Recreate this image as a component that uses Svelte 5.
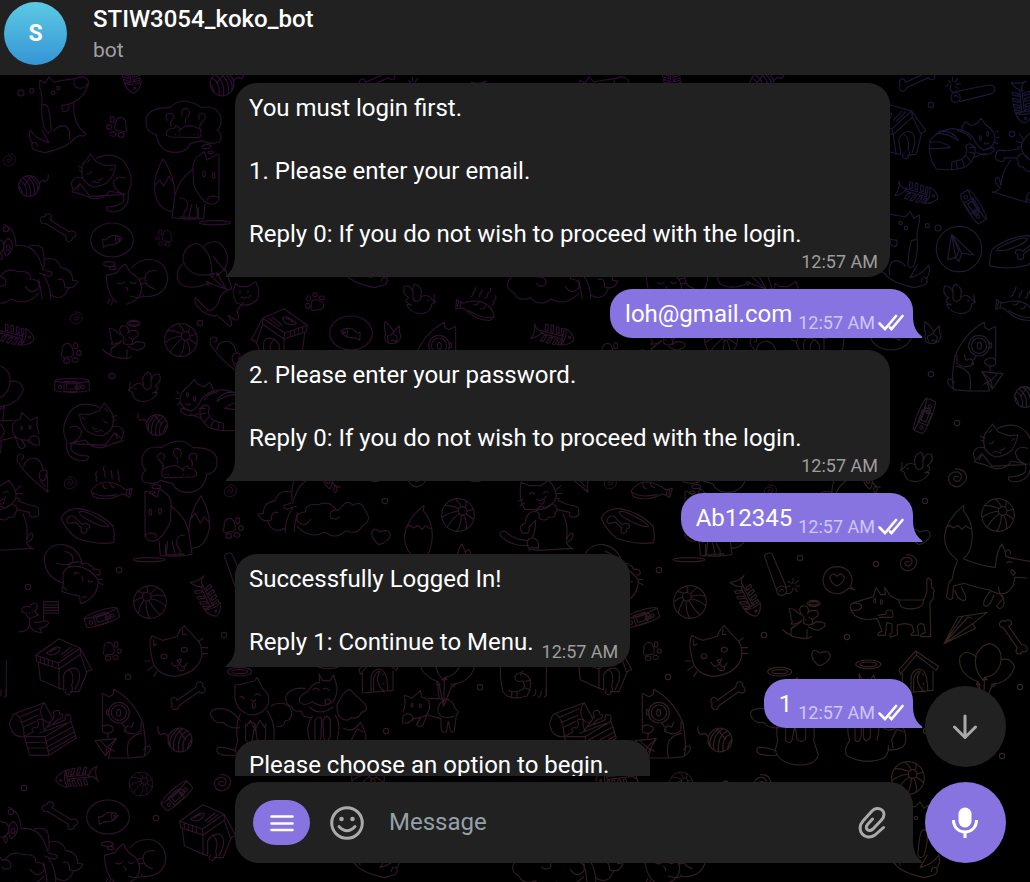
<script>
  const ring = (x, y, r, q = r) => `M${x - r} ${y}a${r} ${q} 0 1 0 ${2 * r} 0a${r} ${q} 0 1 0 ${-2 * r} 0Z`;

  // Doodles: [centre x, centre y, outline]. Drawn at three units per pixel.
  const art = {
    dot: [0, 0, ring(0, 0, 8)],
    ball: [0, 0, ring(0, 0, 49) + ring(14, -12, 13) + 'M10 -25Q4 -38 -8 -48M22 -22Q26 -34 24 -43M27 -12Q38 -14 46 -18M23 -3Q42 8 47 14M17 1Q30 24 24 43M10 1Q10 30 -4 49M4 -4Q-20 14 -32 36M1 -12Q-30 -8 -48 8M3 -19Q-22 -30 -40 -28'],
    paw: [0, 0, 'M-4 -14Q0 -32 16 -28Q30 -20 26 -4Q34 10 22 14Q10 10 0 12Q-12 6 -4 -14Z' + ring(-14, -22, 6, 9) + ring(-24, 0, 7, 7) + ring(-12, 21, 9, 7) + ring(13, 24, 9, 7)],
    bone: [0, 0, 'M-34 -8Q-30 -22 -42 -22Q-54 -20 -52 -8Q-62 -4 -58 8Q-50 18 -38 8L34 8Q38 20 48 18Q58 12 52 2Q62 -6 54 -14Q44 -22 34 -8Z'],
    swirl: [0, 0, 'M4 -3Q-8 -8 -9 2Q-4 14 8 6Q18 -8 4 -16Q-16 -20 -23 -2Q-24 22 0 24Q26 18 26 -6Q20 -26 -4 -25'],
    yarn: [0, 0, ring(0, 0, 31) + 'M-26 -15Q-4 -6 -8 30M-18 -24Q8 -8 4 30M-8 -30Q22 -10 16 26M4 -30Q32 -8 25 16M-30 0Q-22 8 -20 22M-14 -2Q-2 -16 6 -30M30 -8Q40 -22 48 -14Q58 -14 58 -34'],
    collar: [0, 0, 'M-52 -14Q-50 -22 0 -23Q50 -22 52 -14V12Q48 18 0 19Q-48 18 -52 12ZM-52 -14Q0 -4 52 -14M-24 -14H14V17H-24ZM-16 -7H24V9H-16Z' + ring(-36, 3, 5) + ring(14, 3, 5) + ring(32, 3, 5)],
    fishbone: [0, 0, 'M-60 -24Q-52 -2 -34 -7Q-38 12 -64 22Q-52 2 -60 -24ZM-34 -6L30 -2V6L-34 1ZM-28 -28h8l3 18h-8ZM-11 -28h8l3 19h-8ZM6 -26h8l3 18h-8ZM22 -24h7l2 18h-7ZM-26 6h8l-8 18h-8ZM-8 8h8l-8 18h-8ZM10 9h8l-8 18h-8ZM26 10h6l-6 16h-8ZM34 -26Q62 -14 64 4Q52 22 30 25Q44 0 34 -26Z' + ring(50, -2, 3)],
    heart: [0, 0, 'M-4 -12Q-22 -30 -28 -8Q-26 12 -6 26Q22 18 28 -2Q26 -24 -4 -12Z'],
    loveNote: [712, 120, 'M748 144Q728 162 712 161Q672 158 670 120Q674 82 712 80Q752 82 757 120Q756 134 752 140L765 150ZM712 109Q698 94 690 112Q692 128 712 138Q734 128 734 112Q726 94 712 109Z'],
    bird: [435, 320, 'M396 322L386 330L397 336Q398 362 428 364Q462 362 472 336L458 338Q484 326 466 316Q488 302 478 282Q460 276 452 304Q458 284 446 275Q422 286 430 314Q410 302 396 322ZM430 314Q430 326 444 328Q458 320 452 304M390 306V320L386 330M404 324l5 2'],
    fish: [335, 632, 'M272 636Q290 606 325 608Q352 612 374 630Q386 632 396 627L388 655Q378 646 366 644Q320 668 280 652ZM278 640Q300 656 350 646M380 632l-2 14M388 632l-2 14M308 614q-2 12 10 14M330 612q2 12 12 12M290 576q-8 8 0 16q-6 8 0 14M312 560q-6 10 2 18q-4 12 2 16M334 574q-4 8 2 14q-4 6 0 10M354 572q-4 10 2 18q-4 8 2 14'],
    bowl: [265, 738, 'M184 714Q200 684 240 686Q300 696 340 738Q346 760 342 788Q290 796 230 774Q198 748 184 714ZM238 696Q250 688 290 712Q330 734 326 740Q304 742 262 718Q240 706 238 696ZM214 728Q200 734 202 718Q212 702 226 712L248 734Q256 726 268 734Q274 744 262 746Q262 762 250 760Q240 756 246 744L228 726Q224 730 214 728Z'],
    house: [190, 320, 'M108 285L178 235L242 264L176 308ZM108 285L112 304L178 326L242 282V264M176 308L178 326V384L122 358L116 308M242 264L276 328L260 334L242 282M178 384L192 388M212 394L238 394L262 336M192 386V344Q204 320 228 324Q244 330 238 362L226 388M200 388Q190 396 206 404Q224 392 216 376Q226 344 210 330M140 278L168 260L182 262L176 276Q156 290 140 278ZM152 276Q160 264 172 266M184 284L214 260M192 288L224 264M122 290V304M134 295V312M146 299V316M158 302V320'],
    frontHouse: [955, 395, 'M898 388L948 332L1016 378L1010 390L950 344L902 402ZM908 400V458L1000 450V392M950 332V344M934 455V410Q940 386 960 386Q984 390 984 450M942 455V414Q950 390 962 394Q940 420 974 455M968 400l3 4M970 428l3 4'],
    fishThought: [0, 0, ring(0, 0, 64, 51) + 'M-28 -2L-26 22L-10 14Q14 18 30 -4Q18 -18 -4 -12Q-14 -6 -18 0ZM14 -14Q4 -2 16 10' + ring(20, -2, 3)],
    napCat: [410, 840, 'M394 804Q420 772 464 780Q504 796 502 842Q492 892 430 890M430 884Q424 900 390 888M468 812Q434 808 434 838Q438 860 462 866M348 906Q320 884 318 826L350 818Q360 800 376 792Q380 806 394 820Q430 840 422 878Q414 902 380 912M352 848q12 8 20 -2M390 846q10 10 18 0M376 860q8 6 6 12M416 838l16 -4M420 852l14 -2M328 896l-6 14M336 900l-2 14' + ring(327, 792, 17, 7) + ring(337, 804, 10, 5)],
    planeCat: [303, 550, 'M246 524Q242 496 256 484L272 463L288 486Q306 494 320 498L347 496Q344 520 330 540Q314 560 280 562Q248 550 246 524ZM288 476Q340 452 374 488Q408 540 384 578Q392 626 346 636Q316 638 320 622Q356 622 370 606Q376 590 364 580Q344 572 340 548Q352 526 376 536M376 584Q346 578 328 574Q312 602 274 596L244 584L216 576L240 552L270 590ZM246 534Q220 528 214 552L218 568M240 552L232 570M236 500l12 6M238 512l8 4M262 522q10 2 12 -8M294 540q10 4 14 -6M276 548l8 -4q6 8 14 4M262 488l8 -8M330 512l8 -6'],
    fox: [560, 570, 'M578 510Q576 476 600 464L612 454L620 480L638 470Q654 460 656 464V596Q650 614 630 612Q602 606 580 554ZM622 600Q620 588 640 588Q656 590 655 598M578 508Q536 536 524 586L515 652Q540 660 610 656L614 612M588 614L592 650M574 614L566 650M594 622V650M538 594Q566 594 560 626Q546 642 552 650M515 634Q470 630 462 568Q462 520 488 476Q524 530 524 584M464 556L478 540L490 558L506 528L518 546M538 656q6 -12 14 0q8 -10 14 0q8 -10 14 0q8 -10 18 0' + ring(611, 522, 4, 9) + ring(640, 526, 4, 9) + ring(644, 668, 47, 6)],
    idea: [553, 380, 'M470 402Q434 396 440 354Q450 320 510 322Q550 282 606 322Q650 312 664 350Q666 382 652 388Q672 408 660 424Q628 436 608 420L572 430Q560 458 520 456Q476 450 470 402ZM500 404Q500 382 524 384L528 376Q548 384 538 392Q558 370 580 378L602 386Q610 408 596 412L512 410ZM502 360q-10 -24 14 -20q14 10 0 20q-6 8 -2 18M548 348q-8 -22 12 -24q18 10 4 24q-10 8 -6 20M600 356q-10 -14 8 -18q18 10 2 24q-10 8 -10 20' + ring(621, 439, 13, 6) + ring(633, 456, 8, 4) + 'M526 402v2M540 402v2M584 402v2M596 402v2'],
    tabby: [245, 222, 'M244 180Q246 164 256 154L272 168Q284 164 290 160L302 145L316 164Q346 182 344 210Q338 236 310 240Q296 236 280 206Q262 178 216 176Q170 182 150 210Q140 260 168 297Q220 304 256 290Q288 268 284 236Q270 212 256 228Q266 250 244 268L216 276M280 262L314 250M290 248Q320 262 342 242L340 232L320 236M268 232h18M266 246l18 4M258 258l12 14M244 268l8 20M228 274l2 22M214 278v20M176 184Q220 180 234 212Q206 190 168 190M148 216Q190 212 210 232Q190 236 146 236M230 182Q262 188 272 208M346 188l8 -6M348 202h8M344 216l8 6M312 218q6 8 14 0' + ring(300, 204, 3, 7) + ring(322, 192, 3, 7)],
    detective: [370, 495, 'M308 404V506Q304 520 324 520Q344 516 340 502Q320 488 310 500M308 400L328 410L340 404L342 388Q402 420 430 490Q442 550 434 590L390 594H326L334 566M434 588Q460 570 450 558Q436 558 432 570M326 520L324 534M286 542L350 536L318 588ZM318 588L322 562L350 536M322 562L344 574M322 562L304 544M386 594Q380 560 388 542Q404 522 426 520M374 514Q378 490 396 502L402 486M374 514Q402 530 424 512V486M380 512q-8 -8 2 -14M366 488L374 500' + ring(358, 458, 31) + ring(358, 458, 23) + ring(357, 458, 6, 10) + ring(323, 457, 3, 8)],
    chest: [130, 510, 'M30 494Q34 466 48 460L134 428L158 474M30 494Q38 534 72 530L100 516M48 460Q72 480 74 530L90 586L148 586L136 530L74 530M136 530L214 484L230 534L148 586M134 428Q116 450 128 474Q138 490 150 486M60 472L118 446M64 488L114 466M72 502L108 484M82 548L138 546M86 564L142 564M140 544L220 500M144 560L224 516M146 574L226 528M100 516Q92 506 104 502Q116 510 116 488Q108 476 122 478Q134 476 130 490L134 512L164 470Q156 452 170 452Q180 448 180 462Q196 464 184 476Q172 476 160 494L196 480Q194 462 206 464Q218 466 212 486M120 520L200 490M146 500l18 -10'],
    sheep: [100, 870, 'M0 784Q26 786 28 806Q26 830 4 832M26 742Q62 754 64 806Q112 800 134 846L146 878L172 886Q176 894 162 898L134 888M104 808Q124 800 142 812Q150 830 148 870M150 846Q190 838 198 872Q234 876 234 910L250 912Q238 940 210 930Q210 900 190 908M132 908Q140 940 142 966M146 894Q170 930 168 966M-70 900Q-60 870 -34 886Q-20 866 0 890Q10 910 22 892Q40 872 70 884Q108 880 108 906Q140 908 132 934Q110 956 92 928M-70 900Q-96 930 -62 948Q-50 976 -14 962Q16 992 50 966Q92 990 132 950M168 954Q206 976 222 932M12 898Q40 902 32 924Q12 932 6 920M30 830Q20 796 42 784Q60 800 50 820Q40 836 34 836Z' + ring(34, 756, 8) + ring(40, 812, 6, 8) + ring(18, 838, 5, 9)],
    angelRat: [370, 180, 'M360 146Q366 132 382 140Q390 150 384 160M384 160Q390 148 410 152Q420 160 414 168L400 178M360 146Q360 160 372 170L372 190Q388 200 398 190Q402 182 394 174M362 164Q340 142 328 146Q334 160 334 178Q342 184 334 192Q348 194 366 182M398 194Q410 178 436 190Q438 202 424 206Q418 214 402 208L386 200M366 184L336 206Q330 224 338 230L308 208Q330 234 382 236V208M382 236L396 230M334 206L346 196M378 178l2 2M388 172l2 2' + ring(402, 130, 20, 9) + ring(402, 130, 14, 5)],
    mouse: [100, 580, 'M60 554Q48 544 54 528Q64 518 72 528Q72 540 64 538M60 554Q80 588 142 634L144 606Q142 590 142 574Q130 566 120 578Q114 598 130 604Q142 598 138 584M72 562Q76 534 106 536Q126 542 130 568M122 604L136 620' + ring(143, 634, 3)],
    flagRat: [115, 170, 'M92 136Q102 122 112 132Q114 146 104 152M92 140Q74 134 66 146Q64 158 80 158M80 158Q78 172 94 174L116 164L104 152M90 174Q84 200 104 212L126 218L120 204Q140 202 148 186Q138 178 122 186L104 186M88 198Q84 214 60 214M96 152l2 2M88 158l2 2M132 124H176V158H132ZM132 134H176M132 142H176M132 150H176M132 158V180'],
    faceCat: [530, 275, 'M454 288Q444 250 454 226L486 240Q508 236 530 228Q538 206 552 196Q568 214 584 232Q608 250 604 290Q588 342 520 348Q460 342 454 288ZM460 238V256L470 250M548 208L546 222L558 222M594 244l14 -10M604 262h18M604 280h18M434 302h16M442 330l16 -12M460 348l10 -14M512 306Q522 328 538 310Q550 330 560 308M530 300L538 310L544 296ZM532 322Q536 336 552 328V318' + ring(491, 288, 9, 7) + ring(552, 268, 9, 7)],
    curlCat: [215, 60, 'M190 70Q130 50 132 -10Q146 -50 190 -46Q240 -34 246 16M190 70Q180 24 214 20Q262 14 294 60Q294 108 250 128L240 130L238 108Q206 104 184 94ZM194 -26Q222 -20 218 6Q200 20 170 10M190 82l8 8M246 110l12 2M222 44q0 -10 14 -4M264 60q0 10 12 4M244 48q6 8 2 14M204 22Q210 4 226 8Q234 0 246 12Q262 6 268 16Q280 18 278 28Q300 24 300 40Q296 48 290 44M296 58h10M296 68l12 6'],
    standCat: [950, 170, 'M914 148Q894 118 902 66L928 76H960L986 60Q1016 96 1004 120Q984 148 950 148ZM952 144Q962 132 974 144Q992 126 1006 136Q1016 152 1004 158Q1006 174 986 170Q978 182 966 178Q950 176 958 162Q944 152 952 144ZM1012 120Q1050 138 1060 136Q1078 140 1074 152Q1080 168 1062 170Q1042 172 1048 156L1010 148M1028 160Q1046 200 1038 240Q1050 210 1058 222Q1058 240 1040 246M1038 246Q1044 260 1058 266M946 154Q920 150 914 190Q896 194 902 208Q902 220 914 218Q930 222 926 200L946 180Q946 210 936 232Q912 238 926 266L954 270L1058 264M952 270Q962 238 934 232M924 256Q870 258 840 226Q836 212 854 212Q880 240 920 240M926 272q4 -18 14 -8q12 -8 14 6M928 102q6 -12 14 0M970 98q8 -8 14 -2M950 116q10 10 16 0q8 4 10 -8M958 128q8 10 14 -6M1006 90l16 -14M1008 100h18M1006 112l12 4M894 122l14 -4M898 136l14 -8'],
    angelCat: [100, 170, 'M46 74L66 72Q90 64 104 62L112 52Q126 74 128 84Q152 100 146 130Q130 164 94 164Q54 156 46 116ZM62 160Q46 190 54 240Q50 260 46 270Q60 312 120 314Q170 312 176 284L162 240Q170 190 142 150M78 190V240Q92 256 98 236L106 190L112 236Q126 252 138 236V190M106 190Q92 176 78 200L92 180L106 210L120 180L138 204M62 180Q20 130 -22 150Q-34 160 -20 176Q-10 190 12 186Q24 206 60 202M154 136Q200 116 216 152Q218 180 196 182Q194 202 172 198M50 272Q14 258 -6 262Q-14 276 4 282Q30 288 50 284M60 112q8 -8 14 4M106 104q10 -8 16 2M94 118l8 6l6 -6M98 126v16q12 6 8 -14' + ring(60, 34, 36, 13) + ring(60, 34, 24, 6)],
    angelFox: [310, 140, 'M298 40L300 66Q280 66 264 94Q234 106 240 126Q256 140 278 124Q308 142 322 132Q352 126 352 80L342 44L330 62L308 60ZM270 140Q300 170 340 140M256 84Q210 80 198 110Q196 130 216 140Q222 156 246 152Q242 170 276 172M352 134Q380 80 392 88Q410 110 436 130Q448 154 424 156Q420 176 394 172Q384 186 364 174Q350 160 352 134M278 168Q256 200 270 240Q250 270 262 286Q320 316 372 294Q388 280 386 256M346 164Q366 190 352 240M286 180V240Q300 250 304 230L306 180Q304 160 286 180M310 180Q322 156 332 180V230Q322 250 312 234ZM372 204Q400 220 422 186Q442 220 438 240Q436 272 386 268M400 262L396 238L412 206L430 214M280 88q10 -10 18 2M310 86q10 -6 18 4' + ring(324, 124, 8) + ring(326, 12, 38, 13) + ring(326, 12, 25, 7)],
    balloons: [1160, 370, 'M1148 422Q1116 384 1128 344Q1150 306 1176 314Q1210 330 1200 374Q1188 408 1158 412ZM1128 352Q1094 324 1078 354Q1074 404 1132 426M1202 360Q1234 352 1242 384Q1226 430 1174 434M1154 412l-6 8h12ZM1132 426l-4 8l12 2ZM1174 434l6 8l6 -10ZM1152 420L1150 500M1136 434L1150 500M1174 440L1150 500'],
    balloonDog: [620, 130, 'M548 156Q558 134 552 106L574 116L600 92L604 112Q638 118 624 156Q620 176 578 176Q566 194 548 190Q542 168 560 162Q582 164 578 184M626 116L678 118Q700 124 704 146Q720 158 708 166L702 214Q696 222 690 212L684 184L678 216Q666 222 662 206V176Q624 168 620 164L608 196Q594 208 590 190L602 172M600 176L588 196M656 114L652 74M684 118Q654 124 652 152Q660 182 700 170' + ring(575, 137, 3, 5) + ring(600, 138, 3, 5)],
    balloonCat: [690, 60, 'M700 36L706 10L718 20H742L768 5Q784 40 770 60Q746 84 712 70Q700 58 700 36ZM696 26Q660 34 656 66Q640 96 624 90Q606 74 588 54Q574 64 610 96Q640 112 652 106L690 140Q702 130 684 106L706 120Q724 122 710 92L730 68M720 32v8M744 30v8M724 50q8 10 14 0q8 8 14 -4M676 -34L696 26M640 -70L676 -26'],
    cluster: [610, 795, 'M636 822Q572 838 550 782Q548 740 590 730Q638 748 636 822ZM612 738Q630 722 656 726Q692 754 680 796Q670 820 650 824M550 790Q522 818 540 850Q570 872 620 852M630 824l14 -4l-6 12ZM650 818l10 6l-8 4ZM620 844l12 4l-8 8ZM636 830L678 868M656 826L680 868M626 848L680 868'],
    sitDog: [170, 345, 'M118 240L134 250L146 230L160 246Q200 238 226 236Q250 224 262 238Q268 250 258 268Q236 312 184 316L186 326Q184 336 196 334Q208 328 206 312M262 252Q250 268 234 264Q218 260 222 240M118 240V262Q128 290 124 316Q122 350 132 386Q136 398 146 398Q154 394 152 380Q148 330 140 316L128 314M220 308Q218 360 240 386L256 402Q250 412 240 406L224 414L208 430Q178 450 132 458L104 450Q90 442 96 430Q110 422 112 440M96 430Q82 410 90 390Q104 416 146 428L124 390M160 394Q170 376 196 378Q214 392 206 420' + ring(158, 279, 5) + ring(174, 264, 5) + ring(94, 272, 6) + ring(62, 279, 9)],
    bubblePlane: [238, 538, ring(238, 538, 68) + 'M216 494L282 556L246 550L238 576L228 564L204 570ZM216 494L228 564L238 544ZM216 494L246 550'],
    glider: [255, 775, 'M192 822L234 742L322 728L278 762L286 776ZM192 822L248 740M192 822L264 742L276 746M192 822L278 762'],
    stick: [280, 70, 'M226 66L328 46Q346 46 346 62Q342 70 336 72L240 96M214 82Q214 68 230 68Q246 76 240 92Q226 104 216 92ZM222 80q8 -8 12 2M220 68Q206 60 214 46M214 40l-8 -8M220 36l-2 -14M226 38l8 -12M230 44l12 -2M228 50l8 6M206 46l-8 4'],
    rocket: [545, 105, 'M530 154L494 54Q490 42 502 40Q514 36 518 48L558 142' + ring(544, 152, 15, 14) + 'M538 154q4 -10 12 -2M558 160Q576 164 578 144M578 130v-14M584 130l10 -8M586 138l12 0M584 146l6 8M572 130l-8 -6M570 138l-8 2'],
    flame: [515, 190, 'M494 156Q490 176 496 194Q486 214 510 222Q540 222 542 198Q534 184 538 168Q524 178 520 188Q514 170 494 156ZM506 216Q494 196 512 196Q518 186 524 196Q536 200 526 218Q520 206 514 214'],
    terrier: [870, 210, 'M750 200Q752 188 774 184L820 170L828 142L842 164H856L854 142L872 168L896 180H968Q984 170 980 120Q986 108 994 122V142Q1008 148 1000 158Q1004 178 990 186L992 290H962Q960 282 976 278L972 254Q960 246 952 258L956 286H934Q930 282 942 276L936 256Q914 246 892 256V284L872 292Q866 284 876 278V252L860 248L856 286H834Q834 276 846 274L832 236Q760 248 750 200ZM760 190Q788 188 784 204Q774 214 756 210M896 178Q896 204 920 206Q974 210 970 178M834 226L858 222Q856 210 868 210Q880 210 878 220Q884 234 868 232L838 232' + ring(824, 182, 3, 7) + ring(844, 186, 3, 7)],
    runFox: [330, 600, 'M232 570Q190 540 194 496Q200 446 252 406L250 422Q282 460 276 510Q272 550 250 566Q300 588 346 592Q350 540 366 522Q378 548 378 560Q410 568 450 574M378 544Q388 532 392 552M232 574Q222 596 216 630Q206 624 200 680Q208 694 218 684L220 648L252 640Q300 656 330 660Q362 680 384 666L400 646L404 622L440 624M224 660Q232 690 252 692Q264 686 252 668L244 650M332 662Q306 694 312 706Q324 720 342 676M356 652Q356 672 370 684L350 708Q358 724 370 708Q376 690 366 676M198 472L210 466L220 474L234 466L246 478L256 468L272 476M380 578q8 -6 16 0M396 598q-8 12 4 18l6 -8Z'],
    striped: [910, 60, 'M846 0Q836 40 850 96Q870 124 922 108Q942 72 926 50Q904 30 886 46Q884 70 908 62Q920 76 910 88Q890 100 868 92M892 94v18M876 96v16M918 84l14 6M916 64l18 -4M902 46l8 -14M940 108q10 -4 8 -20M956 112q10 -4 8 -20M974 112q8 -4 4 -20M980 0V108'],
  };

  const crowd = [
    ['sitDog', 57, 115], ['sitDog', 362, 250, 0, -1], ['sitDog', 372, 840, 0, -1], ['idea', 184, 127], ['fox', 187, 190], ['planeCat', 101, 183],
    ['napCat', 137, 280], ['napCat', 135, 860], ['cluster', 203, 265], ['balloonCat', 230, 300], ['sheep', 28, 267], ['sheep', 33, 850], ['sheep', 308, 500, 0, -1],
    ['idea', 179, 467, 0, -1], ['fox', 177, 527, 0, -1], ['planeCat', 94, 432, 0, -1], ['planeCat', 463, 453], ['tabby', 422, 144], ['tabby', 213, 405, 0, -1],
    ['detective', 123, 725], ['detective', 435, 358, 0, -1], ['chest', 43, 730], ['angelRat', 123, 340], ['angelRat', 263, 620], ['mouse', 33, 473], ['mouse', 226, 356], ['flagRat', 38, 617],
    ['faceCat', 177, 652], ['curlCat', 72, 580], ['standCat', 537, 517], ['standCat', 495, 170, 14, -1], ['angelCat', 253, 717], ['angelFox', 323, 707],
    ['balloons', 447, 663], ['balloonDog', 427, 703], ['balloons', -4, 385], ['balloonDog', 15, 425, 0, -1], ['bubblePlane', 419, 249], ['glider', 425, 628],
    ['stick', 433, 93], ['rocket', 242, 575], ['flame', 392, 333], ['terrier', 350, 610], ['runFox', 450, 570], ['striped', 523, 680],
    ['fishThought', 112, 240], ['fishThought', 108, 817], ['fishThought', 351, 333, 0, -1], ['frontHouse', 378, 672], ['house', 63, 667], ['house', 207, 833], ['house', 357, 132, -8], ['house', 280, 337, 0, -1],
    ['bowl', 88, 526], ['bowl', 477, 252, 6, -1], ['fish', 112, 490], ['fish', 475, 308, 20, -1], ['bird', 145, 387], ['bird', 377, 467], ['bird', 419, 299, 0, -1],
    ['heart', 381, 536], ['heart', 281, 657], ['loveNote', 297, 580],
    ['fishbone', 377, 193, 12], ['fishbone', 13, 335, 10], ['fishbone', 207, 597, 60], ['fishbone', 77, 777, 170], ['fishbone', 482, 102, 80], ['fishbone', 131, 72, 80],
    ['collar', 72, 386], ['collar', 102, 618, -18], ['collar', 177, 796, -42], ['collar', 433, 207, 58], ['collar', 385, 416, -68],
    ['ball', 181, 340], ['ball', 150, 602, 280], ['ball', 141, 784, 0, 0.73], ['ball', 458, 515], ['ball', 368, 778],
    ['yarn', 29, 186], ['yarn', 222, 84, 0, 1.15], ['yarn', 157, 425, 0, -1], ['yarn', 180, 740, 0, -1.15], ['yarn', 485, 397],
    ['paw', 117, 127], ['paw', 164, 238, 0, 0.8], ['paw', 71, 353, 0, -1], ['paw', 112, 651, 0, -0.9], ['paw', 233, 528, 0, -1], ['paw', 315, 302, 90, 0.9],
    ['swirl', 9, 160, 0, 0.75], ['swirl', 76, 318, 0, 0.75], ['swirl', 70, 483, 0, 0.75], ['swirl', 222, 783], ['swirl', 230, 491, 0, 0.75], ['swirl', 417, 478, 0, 1.1], ['swirl', 368, 563],
    ['bone', 58, 228, 32], ['bone', 188, 696, -35], ['bone', 60, 816, 32], ['bone', 473, 637, 55], ['bone', 377, 80, -25],
    ['dot', 112, 376], ['dot', 200, 323], ['dot', 119, 570], ['dot', 28, 587], ['dot', 224, 635], ['dot', 128, 677], ['dot', 24, 788], ['dot', 156, 818], ['dot', 391, 105],
    ['dot', 472, 134], ['dot', 391, 374], ['dot', 417, 423], ['dot', 385, 501], ['dot', 260, 558], ['dot', 336, 564], ['dot', 307, 637], ['dot', 480, 687], ['dot', 462, 756], ['dot', 386, 731],
  ];

  const place = ([name, x, y, turn = 0, size = 1]) => {
    const [cx, cy] = art[name];
    return `translate(${x} ${y}) rotate(${turn}) scale(${size / 3} ${Math.abs(size) / 3}) translate(${-cx} ${-cy})`;
  };

  const messages = [
    { lines: ['You must login first.', '1. Please enter your email.', 'Reply 0: If you do not wish to proceed with the login.'], kind: 'in wide' },
    { lines: ['loh@gmail.com'], kind: 'out' },
    { lines: ['2. Please enter your password.', 'Reply 0: If you do not wish to proceed with the login.'], kind: 'in wide' },
    { lines: ['Ab12345'], kind: 'out' },
    { lines: ['Successfully Logged In!', 'Reply 1: Continue to Menu.'], kind: 'in' },
    { lines: ['1'], kind: 'out' },
    { lines: ['Please choose an option to begin.'], kind: 'in open' },
  ];
</script>

<div class="app">
  <header>
    <div class="avatar">S</div>
    <div class="who">
      <h1>STIW3054_koko_bot</h1>
      <p>bot</p>
    </div>
  </header>

  <main>
    <svg class="wallpaper" aria-hidden="true">
      <defs>
        <linearGradient id="top"><stop offset="0" stop-color="#2b0e32" /><stop offset="0.6" stop-color="#29102f" /><stop offset="1" stop-color="#19183a" /></linearGradient>
        <linearGradient id="bottom"><stop offset="0" stop-color="#2d1229" /><stop offset="0.5" stop-color="#301b24" /><stop offset="1" stop-color="#35261f" /></linearGradient>
        <linearGradient id="fade" x2="0" y2="1"><stop offset="0.1" stop-color="#000" /><stop offset="0.7" stop-color="#fff" /></linearGradient>
        <mask id="lower"><rect width="100%" height="100%" fill="url(#fade)" /></mask>
        <g id="tile" transform="translate(0 -75)">
          {#each crowd as item}
            <path d={art[item[0]][2]} transform={place(item)} />
          {/each}
        </g>
        <mask id="doodles" maskUnits="userSpaceOnUse" x="0" y="0" width="100%" height="100%">
          <g fill="none" stroke="#fff" stroke-width="3.4" stroke-linecap="round" stroke-linejoin="round">
            {#each [-540, 0, 540, 1080, 1620] as x}
              <use href="#tile" {x} />
            {/each}
          </g>
        </mask>
      </defs>
      <g mask="url(#doodles)">
        <rect width="100%" height="100%" fill="url(#top)" />
        <rect width="100%" height="100%" fill="url(#bottom)" mask="url(#lower)" />
      </g>
    </svg>

    <section class="messages">
      {#each messages as m}
        <article class="bubble {m.kind}">
          <div class="text">
            {#each m.lines as line}<p>{line}</p>{/each}
          </div>
          {#if m.kind !== 'in open'}
            <div class="meta">
              <time>12:57 AM</time>
              {#if m.kind === 'out'}
                <svg class="checks" viewBox="0 0 26 18" aria-hidden="true"><path d="M1.5 9.5L7 15L18 2M12 13.5L13.5 15L24.5 2" /></svg>
              {/if}
            </div>
            <svg class="tail" viewBox="0 0 10 22" aria-hidden="true"><path d="M0 0C0 10 3 16 9 20.500Q10 22 8.500 22H0Z" /></svg>
          {/if}
        </article>
      {/each}
    </section>

    <form class="composer" onsubmit={(e) => e.preventDefault()}>
      <div class="field">
        <button type="button" class="menu" aria-label="Menu">
          <svg viewBox="0 0 24 18"><path d="M1.500 2.500h21M1.500 9.500h21M1.500 16h21" /></svg>
        </button>
        <button type="button" class="plain" aria-label="Emoji">
          <svg viewBox="0 0 34 34" width="34" height="34">
            <circle cx="17" cy="17" r="15.300" /><path d="M9 20.500Q17 29 25 20.500" />
            <g class="solid"><circle cx="11.500" cy="13" r="2.300" /><circle cx="22.500" cy="13" r="2.300" /></g>
          </svg>
        </button>
        <input type="text" placeholder="Message" aria-label="Message" />
        <button type="button" class="plain" aria-label="Attach">
          <svg viewBox="0 0 30 32" width="30" height="32"><path d="M14.500 12L9.500 17.500C6 22 11 25.500 15 22L23.500 13C31 4 20 -2 14 4L5 14C-3 23 7 35 17 28L25.500 20.500" /></svg>
        </button>
        <svg class="tail" viewBox="0 0 10 22" aria-hidden="true"><path d="M0 0C0 10 3 16 9 20.500Q10 22 8.500 22H0Z" /></svg>
      </div>
      <div class="actions">
        <button type="button" class="round down" aria-label="Scroll to bottom">
          <svg viewBox="1 0 25 26" width="25" height="26"><path d="M13 2V23M2.500 13L13 23.500L23.500 13" /></svg>
        </button>
        <button type="button" class="round mic" aria-label="Record voice message">
          <svg viewBox="1 0 27 32" width="27" height="32"><rect x="7.500" y="0.500" width="13" height="20" rx="6.500" /><path d="M2.500 13C2.500 29 25.500 29 25.500 13M14 25V31" /></svg>
        </button>
      </div>
    </form>
  </main>
</div>

<style>
  :global(body) { margin: 0; background: #000; }
  .app { height: 100vh; display: flex; flex-direction: column; font-family: Roboto, sans-serif; color: #fff; overflow: hidden; }
  header { flex: none; display: flex; align-items: flex-start; gap: 26px; height: 75px; padding: 2px 4px 0; box-sizing: border-box; background: #212121; }
  .avatar { width: 63px; height: 63px; border-radius: 50%; background: linear-gradient(#5ccae4, #3595d4); display: grid; place-items: center; font-size: 23px; font-weight: 700; }
  h1 { margin: 2px 0 0; font-size: 24px; line-height: 31px; font-weight: 500; }
  .who p { margin: 0; font-size: 21px; line-height: 30px; color: #a0a0a0; }

  main { position: relative; flex: 1; min-height: 0; display: flex; flex-direction: column; padding: 0 24px 19px 235px; }
  .wallpaper { position: absolute; inset: 0; width: 100%; height: 100%; }

  .messages { position: relative; flex: 1; min-height: 0; overflow: hidden; display: flex; flex-direction: column; align-items: flex-start; gap: 12px; margin: 0 83px 6px -10px; padding: 8px 10px 0; }
  .bubble { position: relative; flex: none; display: flex; align-items: flex-end; gap: 8px; box-sizing: border-box; padding: 10px 12px 9px 14px; background: #212121; border-radius: 22px 22px 22px 0; font-size: 24px; line-height: 31px; }
  .text { display: flex; flex-direction: column; gap: 32px; }
  .text p { margin: 0; }
  .wide { width: 100%; max-width: 655px; flex-direction: column; align-items: stretch; gap: 0; }
  .out { align-self: flex-end; background: #8774e1; border-radius: 22px 22px 0 22px; padding: 10px 9px 8px 15px; gap: 6px; }
  .open { width: 415px; border-radius: 22px 22px 0 0; padding-bottom: 24px; }
  .meta { display: flex; align-items: center; justify-content: flex-end; gap: 3px; margin-bottom: -4px; font-size: 18px; line-height: 21px; color: #9d9d9d; }
  .wide .meta { margin-top: 1px; }
  .out .meta { margin-bottom: -3px; color: #cfc7f3; }
  .checks { width: 26px; height: 18px; fill: none; stroke: #fff; stroke-width: 2.6; stroke-linecap: round; }
  .tail { position: absolute; bottom: 0; left: 100%; width: 10px; height: 22px; fill: #212121; }
  .in .tail { left: auto; right: 100%; transform: scaleX(-1); }
  .out .tail { fill: #8774e1; }

  .composer { position: relative; flex: none; display: flex; gap: 12px; }
  .field { position: relative; flex: 1; min-width: 0; height: 81px; box-sizing: border-box; display: flex; align-items: center; padding: 0 25px 0 18px; background: #212121; border-radius: 24px 24px 0 24px; }
  button { border: 0; padding: 0; background: none; display: grid; place-items: center; cursor: pointer; }
  button svg { fill: none; stroke: #aaa; stroke-width: 3; stroke-linecap: round; stroke-linejoin: round; }
  .menu { width: 57px; height: 45px; border-radius: 23px; background: #8774e1; }
  .menu svg { width: 24px; height: 18px; stroke: #fff; stroke-width: 2.6; }
  .menu + .plain { margin-left: 20px; }
  .solid { fill: #aaa; stroke: none; }
  input { flex: 1; min-width: 0; margin: 0 25px; padding: 0; border: 0; outline: 0; background: none; color: #fff; font: 24px/31px Roboto, sans-serif; }
  input::placeholder { color: #95a0a9; opacity: 1; }
  .actions { position: relative; flex: none; width: 81px; }
  .round { width: 81px; height: 81px; border-radius: 50%; }
  .down { position: absolute; bottom: calc(100% + 15px); left: 0; background: #212121; }
  .mic { background: #8774e1; }
  .mic svg { stroke: #fff; stroke-linecap: butt; }
  .mic rect { fill: #fff; stroke: none; }
</style>
